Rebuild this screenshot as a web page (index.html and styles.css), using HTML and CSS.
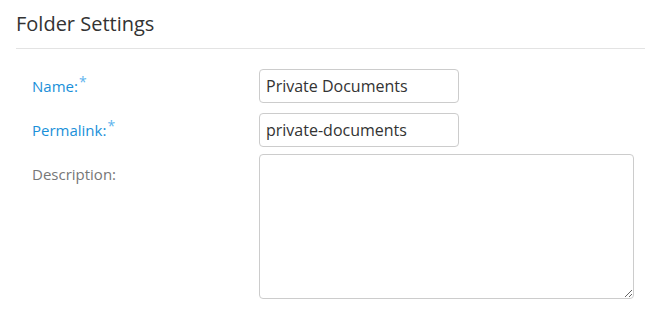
FILE: index.html
```html
<!DOCTYPE html>
<html lang="en">
<head>
  <meta charset="UTF-8">
  <title>Folder Settings</title>
  <link rel="stylesheet" href="styles.css">
</head>
<body>
  <div class="panel">
    <h2 class="panel-title">Folder Settings</h2>
    <form class="settings-form">
      <label class="field-label required" for="name">Name:<sup>*</sup></label>
      <input type="text" class="field-input" id="name" value="Private Documents">

      <label class="field-label required" for="permalink">Permalink:<sup>*</sup></label>
      <input type="text" class="field-input" id="permalink" value="private-documents">

      <label class="field-label" for="description">Description:</label>
      <textarea class="field-textarea" id="description"></textarea>
    </form>
  </div>
</body>
</html>
```

FILE: styles.css
```css
* {
  margin: 0;
  padding: 0;
  box-sizing: border-box;
  font-family: 'Open Sans', Arial, sans-serif;
}

body {
  background: #fff;
  color: #333;
}

.panel {
  padding: 0 1px 0 16px;
}

.panel-title {
  font-size: 20px;
  font-weight: normal;
  color: #333;
  line-height: 27px;
  padding-top: 10px;
  padding-bottom: 11px;
  border-bottom: 1px solid #e3e3e3;
}

.settings-form {
  display: grid;
  grid-template-columns: 227px 375px;
  row-gap: 10px;
  padding: 20px 0 0 16px;
}

.field-label {
  font-size: 15px;
  line-height: 20px;
  padding-top: 7px;
  color: #777;
}

.field-label.required {
  color: #1a90d9;
}

.field-label sup {
  font-size: 14px;
  color: #5eb4ee;
  vertical-align: top;
  position: relative;
  top: -4px;
  margin-left: 1px;
}

.field-input {
  width: 200px;
  height: 34px;
  padding: 4px 6px;
  border: 1px solid #ccc;
  border-radius: 4px;
  font-size: 16px;
  color: #333;
  outline: none;
}

.field-textarea {
  width: 375px;
  height: 145px;
  margin-top: -3px;
  border: 1px solid #ccc;
  border-radius: 4px;
  resize: both;
  outline: none;
}
```
